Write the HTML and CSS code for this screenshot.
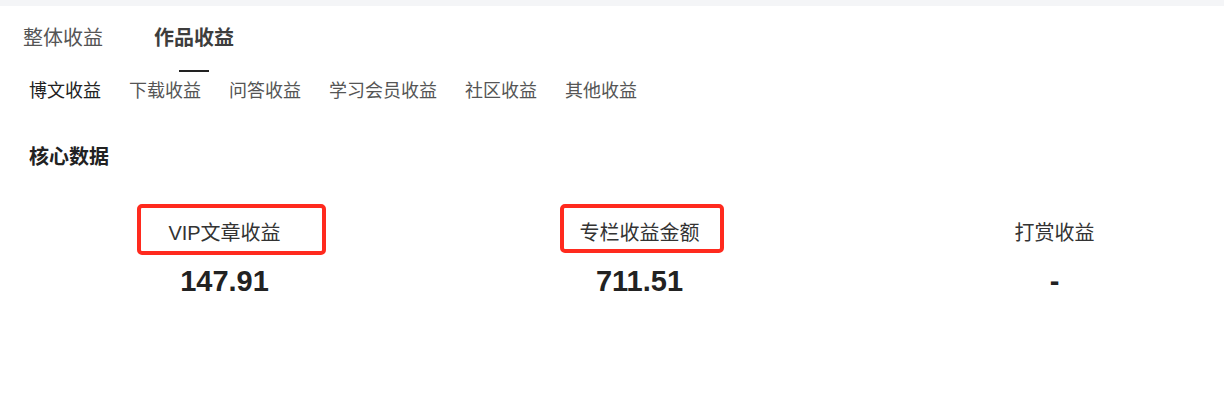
FILE: index.html
```html
<!DOCTYPE html>
<html lang="zh-CN">
<head>
<meta charset="utf-8">
<title>收益</title>
<link rel="stylesheet" href="styles.css">
</head>
<body>
<div class="page">
  <div class="topbar"></div>
  <nav class="tabs">
    <div class="tab"><span class="tab-text">整体收益</span><span class="tab-line"></span></div>
    <div class="tab active"><span class="tab-text">作品收益</span><span class="tab-line"></span></div>
  </nav>
  <nav class="subtabs">
    <span class="subtab active">博文收益</span>
    <span class="subtab">下载收益</span>
    <span class="subtab">问答收益</span>
    <span class="subtab">学习会员收益</span>
    <span class="subtab">社区收益</span>
    <span class="subtab">其他收益</span>
  </nav>
  <h2 class="section-title">核心数据</h2>
  <div class="cards">
    <div class="card">
      <div class="mark mark-1"></div>
      <div class="card-label">VIP文章收益</div>
      <div class="card-value">147.91</div>
    </div>
    <div class="card">
      <div class="mark mark-2"></div>
      <div class="card-label">专栏收益金额</div>
      <div class="card-value">711.51</div>
    </div>
    <div class="card">
      <div class="card-label">打赏收益</div>
      <div class="card-value">-</div>
    </div>
  </div>
</div>
</body>
</html>
```

FILE: styles.css
```css
html, body {
  margin: 0;
  padding: 0;
  background: #ffffff;
}

body {
  font-family: "Liberation Sans", "Noto Sans CJK SC", sans-serif;
  color: #333;
  overflow: hidden;
}

.page {
  width: 1224px;
  overflow: hidden;
}

.topbar {
  height: 6px;
  background: #f4f5f7;
}

.tabs {
  display: flex;
  gap: 51px;
  padding-left: 23px;
  margin-top: 18px;
}

.tab {
  display: flex;
  flex-direction: column;
  align-items: center;
  gap: 18px;
}

.tab-text {
  font-size: 20px;
  line-height: 28px;
  color: #555;
}

.tab-line {
  display: block;
  width: 30px;
  height: 2px;
  background: transparent;
}

.tab.active .tab-text {
  font-weight: bold;
  color: #3d3d3d;
}

.tab.active .tab-line {
  background: #222;
}

.subtabs {
  display: flex;
  gap: 28px;
  padding-left: 29px;
  margin-top: 7px;
}

.subtab {
  font-size: 18px;
  line-height: 24px;
  color: #555;
}

.subtab.active {
  color: #222;
}

.section-title {
  margin: 40px 0 0 0;
  padding-left: 29px;
  font-size: 20px;
  line-height: 28px;
  font-weight: bold;
  color: #222;
}

.cards {
  display: grid;
  grid-template-columns: repeat(3, 415px);
  padding-left: 17px;
  margin-top: 48px;
}

.card {
  position: relative;
  display: flex;
  flex-direction: column;
  align-items: center;
}

.card-label {
  font-size: 20px;
  line-height: 28px;
  color: #333;
}

.card-value {
  margin-top: 16px;
  font-size: 29px;
  line-height: 36px;
  font-weight: bold;
  color: #222;
}

.mark {
  position: absolute;
  border: 4px solid #ff2a1e;
  border-radius: 5px;
  box-sizing: border-box;
}

.mark-1 {
  left: 120px;
  top: -15px;
  width: 189px;
  height: 51px;
}

.mark-2 {
  left: 128px;
  top: -15px;
  width: 164px;
  height: 49px;
}
```
